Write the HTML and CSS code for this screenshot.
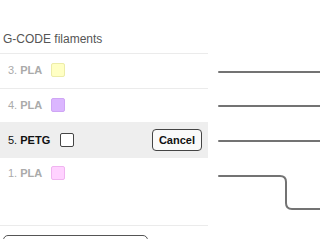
FILE: index.html
```html
<!DOCTYPE html>
<html>
<head>
<meta charset="utf-8">
<link rel="stylesheet" href="styles.css">
</head>
<body>
<div class="app">
  <div class="panel">
    <div class="header">G-CODE filaments</div>
    <div class="row dim sep r3">
      <span class="label">3. <b>PLA</b></span>
      <span class="swatch yellow"></span>
    </div>
    <div class="row dim r4">
      <span class="label">4. <b>PLA</b></span>
      <span class="swatch purple"></span>
    </div>
    <div class="row active">
      <span class="label">5. <b>PETG</b></span>
      <span class="swatch empty"></span>
      <button class="cancel">Cancel</button>
    </div>
    <div class="row dim last">
      <span class="label">1. <b>PLA</b></span>
      <span class="swatch pink"></span>
    </div>
    <div class="footer"><button class="wide"></button></div>
  </div>
  <svg class="diagram" width="112" height="240" viewBox="0 0 112 240">
    <g fill="none" stroke="#737373" stroke-width="2" stroke-linecap="round">
      <path d="M11 72 H113"/>
      <path d="M11 106 H113"/>
      <path d="M11 141 H113"/>
      <path d="M11 176 H72 Q78 176 78 182 V203 Q78 209 84 209 H113"/>
    </g>
  </svg>
</div>
</body>
</html>
```
FILE: styles.css
```css
* { box-sizing: border-box; }
html, body { margin: 0; padding: 0; background: #fff; overflow: hidden; }
body { font-family: "Liberation Sans", Arial, sans-serif; }
.app { display: flex; width: 320px; height: 240px; overflow: hidden; }
.panel { width: 208px; height: 240px; flex: none; display: flex; flex-direction: column; overflow: hidden; }
.panel > * { flex: none; }
.header {
  height: 54px;
  padding: 32px 0 0 3px;
  font-size: 12px;
  line-height: 14px;
  color: #555;
  border-bottom: 1px solid #ebebeb;
}
.row {
  display: flex;
  align-items: center;
  padding: 0 6px 0 8px;
  font-size: 11px;
  color: #111;
}
.row.r3 { height: 35px; padding-bottom: 3px; border-bottom: 1px solid #ebebeb; }
.row.r4 { height: 33px; padding-bottom: 2px; }
.row.active { height: 36px; background: #eeeeee; }
.row.last {
  height: 68px;
  align-items: flex-start;
  padding-top: 8px;
  border-bottom: 1px solid #ebebeb;
}
.row.last .label { line-height: 14px; }
.row.dim { color: #aaa; }
.label { white-space: nowrap; }
.label b { font-weight: bold; }
.swatch {
  width: 14px; height: 14px;
  border-radius: 2px;
  margin-left: 9px;
  border: 1px solid;
}
.row.active .swatch { margin-left: 10px; }
.yellow { background: #ffffc4; border-color: #ececa8; }
.purple { background: #dbb6ff; border-color: #cfa6f5; }
.pink { background: #ffd2ff; border-color: #f0b4f0; }
.empty { background: #fff; border-color: #444; border-radius: 2px; }
.cancel {
  margin-left: auto;
  height: 22px;
  padding: 0 6px;
  font-family: "Liberation Sans", Arial, sans-serif;
  font-weight: bold;
  font-size: 11px;
  color: #111;
  background: #fafafa;
  border: 1px solid #444;
  border-radius: 4px;
}
.footer { height: 13px; padding: 9px 0 0 3px; overflow: hidden; }
.wide {
  display: block;
  width: 145px;
  height: 24px;
  background: #fff;
  border: 1px solid #555;
  border-radius: 5px;
}
.diagram { flex: none; display: block; }
```
